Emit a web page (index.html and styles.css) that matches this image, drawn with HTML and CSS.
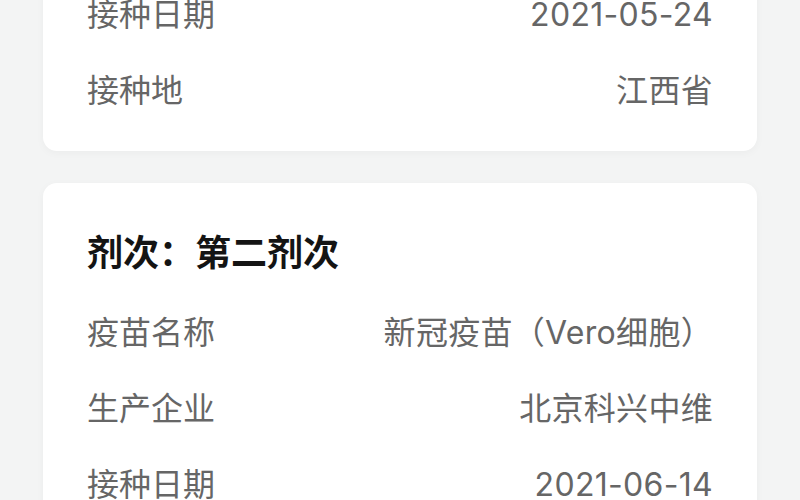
FILE: index.html
```html
<!DOCTYPE html>
<html lang="zh-CN">
<head>
<meta charset="utf-8">
<title>接种记录</title>
<link rel="stylesheet" href="styles.css">
</head>
<body>
<main class="records">
  <section class="card card-first">
    <div class="row"><span class="label">接种日期</span><span class="value">2021-05-24</span></div>
    <div class="row"><span class="label">接种地</span><span class="value">江西省</span></div>
  </section>
  <section class="card">
    <h2 class="dose">剂次：第二剂次</h2>
    <div class="row"><span class="label">疫苗名称</span><span class="value">新冠疫苗（Vero细胞）</span></div>
    <div class="row"><span class="label">生产企业</span><span class="value">北京科兴中维</span></div>
    <div class="row"><span class="label">接种日期</span><span class="value">2021-06-14</span></div>
    <div class="row"><span class="label">接种地</span><span class="value">江西省</span></div>
  </section>
</main>
</body>
</html>
```

FILE: styles.css
```css
html, body {
  margin: 0;
  padding: 0;
  background: #f3f4f4;
  font-family: Inter, "Noto Sans CJK SC", "Noto Sans", sans-serif;
  overflow: hidden;
}

.records {
  display: flex;
  flex-direction: column;
  gap: 32px;
  padding: 0 43px;
  margin-top: -50px;
}

.card {
  background: #ffffff;
  border-radius: 14px;
  padding: 26px 44px 25px;
  box-shadow: 0 2px 8px rgba(0, 0, 0, 0.035);
}

.card-first {
  padding-top: 27px;
  padding-bottom: 22px;
}

.dose {
  margin: 0 0 4px;
  height: 82px;
  display: flex;
  align-items: center;
  font-size: 36px;
  font-weight: 700;
  color: #141414;
}

.row {
  height: 76px;
  display: flex;
  align-items: center;
  justify-content: space-between;
  font-size: 32px;
  color: #666666;
}

.value {
  letter-spacing: 0.3px;
}

.label,
.value {
  line-height: 1;
}
```
